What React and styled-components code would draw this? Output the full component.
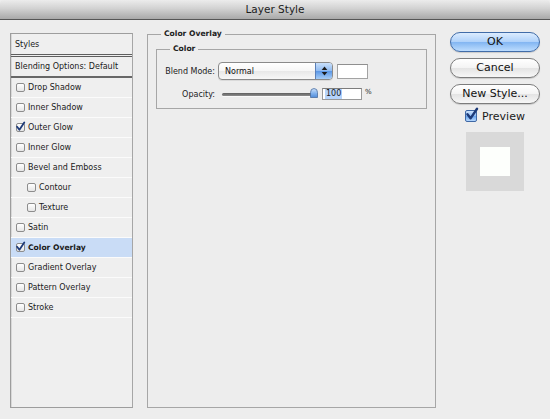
import React from "react";
import styled, { createGlobalStyle, css } from "styled-components";

const Global = createGlobalStyle`
  html, body { margin: 0; padding: 0; background: #ededed; }
  body { font-family: "DejaVu Sans", "Liberation Sans", sans-serif; color: #1a1a1a; }
  * { box-sizing: border-box; }
`;

const Window = styled.div`
  width: 550px;
  height: 419px;
  overflow: hidden;
  background: #ededed;
  display: flex;
  flex-direction: column;
`;

const TitleBar = styled.div`
  height: 20px;
  flex: none;
  border-bottom: 1px solid #565656;
  border-radius: 4px 4px 0 0;
  background: linear-gradient(#ececec, #d2d2d2 45%, #b4b4b4 85%, #a9a9a9);
  text-align: center;
  font-size: 10.5px;
  line-height: 19px;
  color: #1c1c1c;
`;

const Body = styled.div`
  display: grid;
  grid-template-columns: 123px 289px 90px;
  column-gap: 14px;
  padding: 9px 0 0 10px;
  align-items: start;
`;

/* ---------- left style list ---------- */

const ListPanel = styled.div`
  margin-top: 4px;
  height: 375px;
  border: 1px solid #9d9d9d;
  border-right-color: #a6a6a6;
  background: #efefef;
  box-shadow: inset 1px 0 0 #d8d8d8;
  display: flex;
  flex-direction: column;
  font-size: 8px;
`;

const HeaderRow = styled.div`
  display: flex;
  align-items: center;
  flex: none;
  padding-left: 4px;
  height: ${(p) => (p.$first ? 23 : 21)}px;
  ${(p) =>
    p.$first
      ? css`border-bottom: 3px double #5e5e5e;`
      : css`border-bottom: 2px solid #676767;`}
`;

const StyleRow = styled.div`
  display: flex;
  align-items: center;
  gap: 3px;
  height: 20px;
  flex: none;
  padding-left: ${(p) => (p.$indent ? 16 : 5)}px;
  border-bottom: 1px solid #fbfbfb;
  background: ${(p) => (p.$active ? "#c9dcf6" : "transparent")};
  font-weight: ${(p) => (p.$active ? "bold" : "normal")};
  font-size: ${(p) => (p.$active ? 7.6 : 8)}px;
`;

const SmallBox = styled.span`
  position: relative;
  width: 9px;
  height: 9px;
  flex: none;
  border: 1px solid #8d8d8d;
  border-radius: 2px;
  background: linear-gradient(#ffffff, #e6e6e6);
`;

const Tick = styled.svg`
  position: absolute;
  left: ${(p) => p.$x}px;
  top: ${(p) => p.$y}px;
  overflow: visible;
`;

function CheckMark({ size = 10, x = 0, y = -2 }) {
  return (
    <Tick $x={x} $y={y} width={size} height={size} viewBox="0 0 10 10">
      <path
        d="M1.2 5.2 L3.8 8.6 L9.2 0.6"
        fill="none"
        stroke="#1d3a78"
        strokeWidth="2"
        strokeLinecap="round"
        strokeLinejoin="round"
      />
    </Tick>
  );
}

function SmallCheck({ checked }) {
  return <SmallBox>{checked && <CheckMark size={9} x={-1} y={-2} />}</SmallBox>;
}

/* ---------- middle fieldsets ---------- */

const Group = styled.fieldset`
  margin: 0;
  min-width: 0;
  border: 1px solid #a6a6a6;
  padding: ${(p) => (p.$outer ? "5px 8px 0 8px" : "8px 8px 8px 8px")};
  ${(p) => p.$outer && css`height: 379px;`}
`;

const Legend = styled.legend`
  margin-left: 5px;
  padding: 0 3px;
  font-size: 7.6px;
  font-weight: bold;
  line-height: 10px;
  color: #222;
`;

const FormGrid = styled.div`
  display: grid;
  grid-template-columns: 50px auto;
  column-gap: 3px;
  row-gap: 8px;
  align-items: center;
  font-size: 8px;
`;

const Label = styled.label`
  justify-self: end;
  white-space: nowrap;
  color: #222;
`;

const FieldRow = styled.div`
  display: flex;
  align-items: center;
  height: ${(p) => p.$h}px;
`;

const Select = styled.div`
  display: flex;
  width: 115px;
  height: 18px;
  border: 1px solid #8a8a8a;
  border-radius: 4px;
  overflow: hidden;
  background: linear-gradient(#ffffff, #f6f6f6 50%, #e8e8e8 52%, #f7f7f7);
  box-shadow: 0 1px 0 rgba(0, 0, 0, 0.08);
`;

const SelectText = styled.span`
  flex: 1;
  display: flex;
  align-items: center;
  padding-left: 6px;
  font-size: 8px;
  color: #111;
`;

const Stepper = styled.span`
  width: 17px;
  display: flex;
  align-items: center;
  justify-content: center;
  border-left: 1px solid #5a7fb8;
  background: linear-gradient(#c9e0fb, #8fbaf0 50%, #5b97e6 52%, #a6cdf7);
`;

const Swatch = styled.div`
  width: 31px;
  height: 15px;
  margin-left: 4px;
  background: #ffffff;
  border: 1px solid #a3a3a3;
  border-top-color: #8f8f8f;
`;

const Slider = styled.div`
  position: relative;
  width: 96px;
  height: 12px;
  margin-left: 4px;
  display: flex;
  align-items: center;
`;

const Track = styled.div`
  width: 92px;
  height: 3px;
  border-radius: 2px;
  background: linear-gradient(#5e5e5e, #8d8d8d);
  box-shadow: 0 1px 0 #fafafa;
`;

const Knob = styled.svg`
  position: absolute;
  right: 0;
  top: 0;
`;

const NumberBox = styled.div`
  width: 40px;
  height: 12px;
  margin-left: 4px;
  background: #fff;
  border: 1px solid #999;
  border-top-color: #7c7c7c;
  display: flex;
  align-items: center;
  padding-left: 2px;
  font-size: 8px;
`;

const Selected = styled.span`
  background: #b6d4fb;
  line-height: 10px;
  padding: 0 1px;
`;

const Unit = styled.span`
  margin-left: 3px;
  font-size: 7px;
  align-self: flex-start;
`;

/* ---------- right column ---------- */

const Side = styled.div`
  margin-top: 3px;
  display: flex;
  flex-direction: column;
  align-items: center;
`;

const Button = styled.button`
  width: 90px;
  height: 20px;
  margin: 0 0 6px 0;
  padding: 0;
  border: 1px solid ${(p) => (p.$primary ? "#416ca8" : "#7c7c7c")};
  border-radius: 10px;
  font-family: "DejaVu Sans", sans-serif;
  font-size: 11px;
  line-height: 18px;
  color: #111;
  background: ${(p) =>
    p.$primary
      ? "linear-gradient(#dcecfe, #b0d2fa 48%, #83b6f2 52%, #bcdcfe)"
      : "linear-gradient(#ffffff, #f4f4f4 48%, #e4e4e4 52%, #f7f7f7)"};
  box-shadow: 0 1px 1px rgba(0, 0, 0, 0.15);
`;

const PreviewRow = styled.label`
  display: flex;
  align-items: center;
  gap: 5px;
  height: 14px;
  margin-top: -1px;
  font-size: 11px;
`;

const BigBox = styled.span`
  position: relative;
  width: 12px;
  height: 12px;
  border: 1px solid #3f68a5;
  border-radius: 2px;
  background: linear-gradient(#cfe4fd, #8dbbf3 50%, #6aa5ee 52%, #b5d7fd);
`;

const PreviewFrame = styled.div`
  margin-top: 9px;
  width: 58px;
  height: 59px;
  background: #d9d9d9;
  display: flex;
  align-items: center;
  justify-content: center;
`;

const PreviewSwatch = styled.div`
  width: 30px;
  height: 29px;
  background: #fdfffc;
`;

const styles = [
  { name: "Drop Shadow" },
  { name: "Inner Shadow" },
  { name: "Outer Glow", checked: true },
  { name: "Inner Glow" },
  { name: "Bevel and Emboss" },
  { name: "Contour", indent: true },
  { name: "Texture", indent: true },
  { name: "Satin" },
  { name: "Color Overlay", checked: true, active: true },
  { name: "Gradient Overlay" },
  { name: "Pattern Overlay" },
  { name: "Stroke" },
];

export default function App() {
  return (
    <Window>
      <Global />
      <TitleBar>Layer Style</TitleBar>
      <Body>
        <ListPanel>
          <HeaderRow $first>Styles</HeaderRow>
          <HeaderRow>Blending Options: Default</HeaderRow>
          {styles.map((s) => (
            <StyleRow key={s.name} $indent={s.indent} $active={s.active}>
              <SmallCheck checked={s.checked} />
              {s.name}
            </StyleRow>
          ))}
        </ListPanel>

        <Group $outer>
          <Legend>Color Overlay</Legend>
          <Group>
            <Legend>Color</Legend>
            <FormGrid>
              <Label>Blend Mode:</Label>
              <FieldRow $h={18}>
                <Select>
                  <SelectText>Normal</SelectText>
                  <Stepper>
                    <svg width="7" height="10" viewBox="0 0 7 10">
                      <path d="M3.5 0.5 L6.3 4 L0.7 4 Z" fill="#1a1a1a" />
                      <path d="M3.5 9.5 L6.3 6 L0.7 6 Z" fill="#1a1a1a" />
                    </svg>
                  </Stepper>
                </Select>
                <Swatch />
              </FieldRow>
              <Label>Opacity:</Label>
              <FieldRow $h={12}>
                <Slider>
                  <Track />
                  <Knob width="8" height="10" viewBox="0 0 8 10">
                    <defs>
                      <linearGradient id="kg" x1="0" y1="0" x2="0" y2="1">
                        <stop offset="0" stopColor="#cfe3fb" />
                        <stop offset="0.55" stopColor="#7fb0ec" />
                        <stop offset="1" stopColor="#4f8bd9" />
                      </linearGradient>
                    </defs>
                    <path
                      d="M0.5 9.5 L0.5 4.5 Q0.5 0.5 4 0.5 Q7.5 0.5 7.5 4.5 L7.5 9.5 Z"
                      fill="url(#kg)"
                      stroke="#4b6f9f"
                      strokeWidth="0.8"
                    />
                  </Knob>
                </Slider>
                <NumberBox>
                  <Selected>100</Selected>
                </NumberBox>
                <Unit>%</Unit>
              </FieldRow>
            </FormGrid>
          </Group>
        </Group>

        <Side>
          <Button $primary>OK</Button>
          <Button>Cancel</Button>
          <Button>New Style...</Button>
          <PreviewRow>
            <BigBox>
              <CheckMark size={12} x={0} y={-3} />
            </BigBox>
            Preview
          </PreviewRow>
          <PreviewFrame>
            <PreviewSwatch />
          </PreviewFrame>
        </Side>
      </Body>
    </Window>
  );
}
